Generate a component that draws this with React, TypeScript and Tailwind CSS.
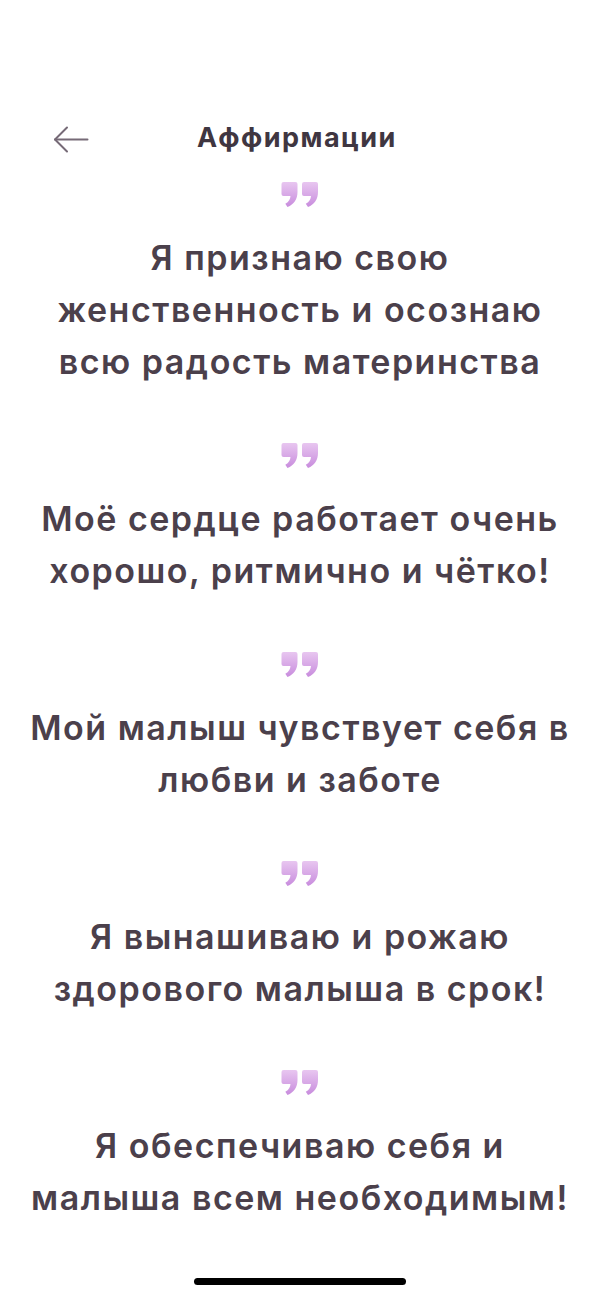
const items = [
  ['Я признаю свою', 'женственность и осознаю', 'всю радость материнства'],
  ['Моё сердце работает очень', 'хорошо, ритмично и чётко!'],
  ['Мой малыш чувствует себя в', 'любви и заботе'],
  ['Я вынашиваю и рожаю', 'здорового малыша в срок!'],
  ['Я обеспечиваю себя и', 'малыша всем необходимым!'],
]

function QuoteMark() {
  return (
    <svg width="38" height="27" viewBox="0 0 38 27">
      <defs>
        <linearGradient id="q" x1="0" y1="0" x2="0" y2="1">
          <stop offset="0" stopColor="#e8c6f0" />
          <stop offset="1" stopColor="#c88cdd" />
        </linearGradient>
      </defs>
      <path
        d="M2.5 1h12a2 2 0 0 1 2 2v8c0 7-3.5 12.5-10 15l-2.2-3.2c3.6-2 5-4.6 5.2-7.8H2.5a2 2 0 0 1-2-2V3a2 2 0 0 1 2-2z"
        fill="url(#q)"
      />
      <path
        d="M23 1h12a2 2 0 0 1 2 2v8c0 7-3.5 12.5-10 15l-2.2-3.2c3.6-2 5-4.6 5.2-7.8H23a2 2 0 0 1-2-2V3a2 2 0 0 1 2-2z"
        fill="url(#q)"
      />
    </svg>
  )
}

function BackArrow() {
  return (
    <svg width="36" height="27" viewBox="0 0 36 27" fill="none" stroke="#766a77" strokeWidth="2" strokeLinecap="round" strokeLinejoin="round">
      <path d="M34.5 13.5H2" />
      <path d="M14 1.5L2 13.5l12 12" />
    </svg>
  )
}

export default function App() {
  return (
    <div
      className="min-h-[1297px] w-[600px] bg-white pt-[122px] text-[#4b404b]"
      style={{ fontFamily: 'Inter, "Noto Sans", sans-serif' }}
    >
      <div className="relative flex h-[32px] items-center justify-center">
        <button className="absolute left-[53px] top-[4px]">
          <BackArrow />
        </button>
        <h1 className="mr-[6px] text-[27px] font-bold leading-[32px] tracking-[1.5px] text-[#3f3641]">
          Аффирмации
        </h1>
      </div>
      <div className="mt-[27px] flex flex-col items-center gap-[54px]">
        {items.map((lines, i) => (
          <div key={i} className="flex flex-col items-center">
            <QuoteMark />
            <div className="mt-[24px] text-center text-[34px] font-semibold leading-[52px] tracking-[1.5px]">
              {lines.map((l) => (
                <div key={l}>{l}</div>
              ))}
            </div>
          </div>
        ))}
      </div>
      <div className="mt-[54px] flex justify-center">
        <div className="h-[7px] w-[212px] rounded-full bg-black" />
      </div>
    </div>
  )
}
